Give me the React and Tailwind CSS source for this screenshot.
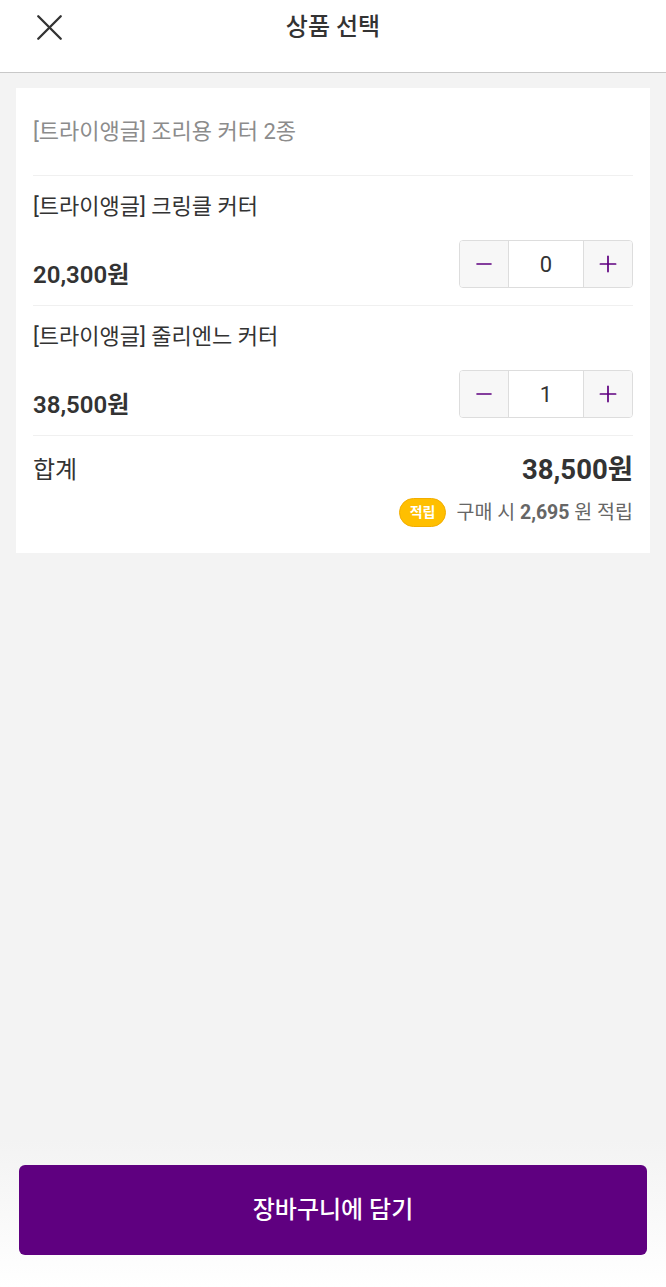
import { X, Minus, Plus } from 'lucide-react'

const font = { fontFamily: 'Roboto, "Noto Sans CJK KR", "Noto Sans", sans-serif' }

function Stepper({ value }) {
  return (
    <div className="flex h-[48px] w-[174px] overflow-hidden rounded-[4px] border border-[#dddddd]">
      <button className="flex w-[48px] items-center justify-center bg-[#f7f7f7] text-[#5f0080]">
        <Minus size={24} strokeWidth={1.6} />
      </button>
      <div className="flex flex-1 items-center justify-center border-x border-[#dddddd] bg-white text-[22px] text-[#333333]">
        {value}
      </div>
      <button className="flex w-[48px] items-center justify-center bg-[#f7f7f7] text-[#5f0080]">
        <Plus size={26} strokeWidth={1.6} />
      </button>
    </div>
  )
}

function ItemRow({ name, price, qty }) {
  return (
    <div className="border-b border-[#f0f0f0] pt-[16px] pb-[17px]">
      <div className="text-[22px] leading-[30px] text-[#333333]">{name}</div>
      <div className="mt-[18px] flex items-end justify-between">
        <div className="text-[24px] font-semibold leading-[26px] text-[#333333]">{price}</div>
        <Stepper value={qty} />
      </div>
    </div>
  )
}

export default function App() {
  return (
    <div className="flex h-[1287px] flex-col bg-[#f3f3f3]" style={font}>
      <header className="relative h-[73px] border-b border-[#c8c8c8] bg-white">
        <div className="flex h-[54px] items-center justify-center">
          <button className="absolute left-[27px] top-[5px] text-[#333333]">
            <X size={45} strokeWidth={1.25} />
          </button>
          <h1 className="text-[24px] font-medium text-[#333333]">상품 선택</h1>
        </div>
      </header>

      <div className="mx-[16px] mt-[15px] bg-white px-[17px]">
        <div className="flex h-[88px] items-center border-b border-[#f0f0f0] text-[22px] text-[#8c8c8c]">
          [트라이앵글] 조리용 커터 2종
        </div>
        <ItemRow name="[트라이앵글] 크링클 커터" price="20,300원" qty={0} />
        <ItemRow name="[트라이앵글] 줄리엔느 커터" price="38,500원" qty={1} />
        <div className="pt-[18px] pb-[26px]">
          <div className="flex items-center justify-between">
            <span className="text-[24px] leading-[32px] text-[#333333]">합계</span>
            <span className="text-[27.5px] font-bold leading-[32px] text-[#333333]">38,500원</span>
          </div>
          <div className="mt-[12px] flex items-center justify-end gap-[10px]">
            <span className="flex h-[29px] items-center rounded-full border border-[#f2ad00] bg-[#ffbf00] px-[10px] text-[14px] font-bold text-white">
              적립
            </span>
            <span className="text-[19.5px] text-[#666666]">
              구매 시 <b className="font-bold">2,695</b> 원 적립
            </span>
          </div>
        </div>
      </div>

      <div className="flex-1" />

      <div className="bg-gradient-to-b from-[#f3f3f3] to-white px-[19px] pt-[25px] pb-[32px]">
        <button className="flex h-[90px] w-full items-center justify-center rounded-[6px] bg-[#5f0080] text-[24px] font-medium text-white">
          장바구니에 담기
        </button>
      </div>
    </div>
  )
}
